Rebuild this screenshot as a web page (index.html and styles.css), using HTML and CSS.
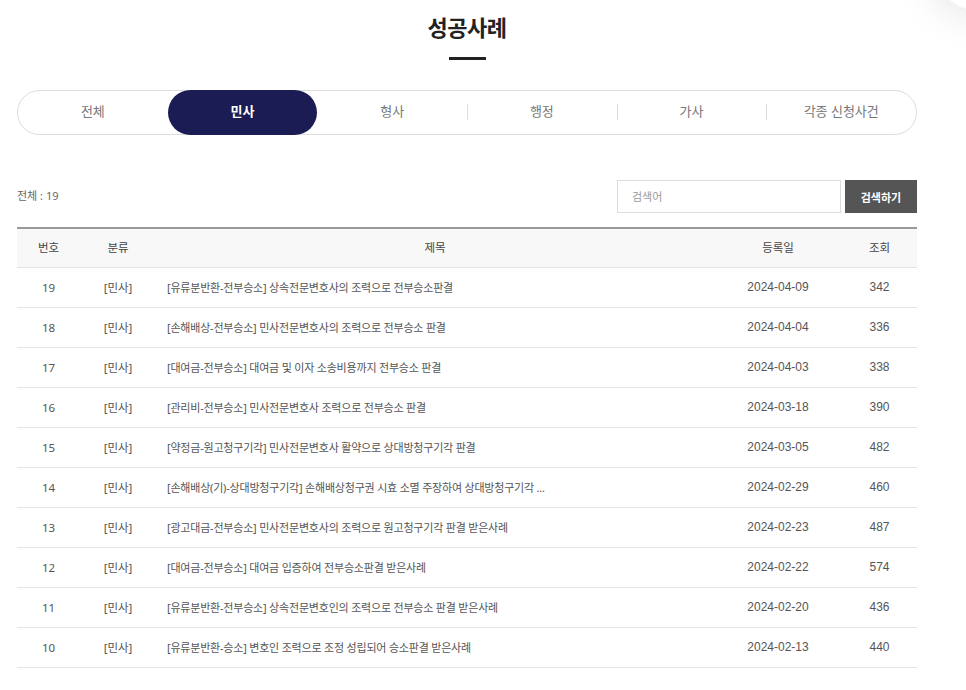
FILE: index.html
```html
<!DOCTYPE html>
<html lang="ko">
<head>
    <meta charset="UTF-8">
    <meta name="viewport" content="width=device-width, initial-scale=1.0">
    <title>성공사례</title>
    <link rel="stylesheet" href="styles.css">
</head>
<body>
    <div class="quick"></div>
    <div class="wrap">
        <h2 class="title">성공사례</h2>
        <ul class="tabs">
            <li>전체</li>
            <li class="on">민사</li>
            <li>형사</li>
            <li>행정</li>
            <li>가사</li>
            <li>각종 신청사건</li>
        </ul>

        <div class="top">
            <p class="total">전체 : 19</p>
            <form class="search">
                <input type="text" placeholder="검색어">
                <button type="button">검색하기</button>
            </form>
        </div>

        <table class="list">
            <colgroup>
                <col class="c-no">
                <col class="c-cate">
                <col>
                <col class="c-date">
                <col class="c-hit">
            </colgroup>
            <thead>
                <tr>
                    <th>번호</th>
                    <th>분류</th>
                    <th>제목</th>
                    <th>등록일</th>
                    <th>조회</th>
                </tr>
            </thead>
            <tbody>
                <tr><td>19</td><td>[민사]</td><td class="subj">[유류분반환-전부승소] 상속전문변호사의 조력으로 전부승소판결</td><td class="num">2024-04-09</td><td class="num">342</td></tr>
                <tr><td>18</td><td>[민사]</td><td class="subj">[손해배상-전부승소] 민사전문변호사의 조력으로 전부승소 판결</td><td class="num">2024-04-04</td><td class="num">336</td></tr>
                <tr><td>17</td><td>[민사]</td><td class="subj">[대여금-전부승소] 대여금 및 이자 소송비용까지 전부승소 판결</td><td class="num">2024-04-03</td><td class="num">338</td></tr>
                <tr><td>16</td><td>[민사]</td><td class="subj">[관리비-전부승소] 민사전문변호사 조력으로 전부승소 판결</td><td class="num">2024-03-18</td><td class="num">390</td></tr>
                <tr><td>15</td><td>[민사]</td><td class="subj">[약정금-원고청구기각] 민사전문변호사 활약으로 상대방청구기각 판결</td><td class="num">2024-03-05</td><td class="num">482</td></tr>
                <tr><td>14</td><td>[민사]</td><td class="subj">[손해배상(기)-상대방청구기각] 손해배상청구권 시효 소멸 주장하여 상대방청구기각 ...</td><td class="num">2024-02-29</td><td class="num">460</td></tr>
                <tr><td>13</td><td>[민사]</td><td class="subj">[광고대금-전부승소] 민사전문변호사의 조력으로 원고청구기각 판결 받은사례</td><td class="num">2024-02-23</td><td class="num">487</td></tr>
                <tr><td>12</td><td>[민사]</td><td class="subj">[대여금-전부승소] 대여금 입증하여 전부승소판결 받은사례</td><td class="num">2024-02-22</td><td class="num">574</td></tr>
                <tr><td>11</td><td>[민사]</td><td class="subj">[유류분반환-전부승소] 상속전문변호인의 조력으로 전부승소 판결 받은사례</td><td class="num">2024-02-20</td><td class="num">436</td></tr>
                <tr><td>10</td><td>[민사]</td><td class="subj">[유류분반환-승소] 변호인 조력으로 조정 성립되어 승소판결 받은사례</td><td class="num">2024-02-13</td><td class="num">440</td></tr>
            </tbody>
        </table>
    </div>
</body>
</html>
```

FILE: styles.css
```css
* {
    margin: 0;
    padding: 0;
    box-sizing: border-box;
}

li {
    list-style: none;
}

body {
    font-family: "Noto Sans", "Noto Sans CJK KR", sans-serif;
    color: #555;
    background: #fff;
    overflow: hidden;
}

.quick {
    position: fixed;
    top: -70px;
    right: -70px;
    width: 100px;
    height: 80px;
    border-radius: 40px;
    background: #fff;
    box-shadow: 0 0 40px 6px rgba(0, 0, 0, 0.1);
}

.wrap {
    width: 900px;
    margin-left: 17px;
    padding-top: 12px;
}

.title {
    text-align: center;
    font-size: 22px;
    font-weight: 700;
    color: #222;
    line-height: 30px;
    letter-spacing: -0.5px;
}

.title::after {
    content: "";
    display: block;
    width: 37px;
    height: 3px;
    background: #222;
    margin: 15px auto 0;
}

.tabs {
    display: flex;
    margin-top: 30px;
    height: 45px;
    border: 1px solid #ddd;
    border-radius: 23px;
}

.tabs li {
    position: relative;
    flex: 1;
    display: flex;
    align-items: center;
    justify-content: center;
    padding-bottom: 4px;
    font-size: 13px;
    color: #777;
    margin: -1px 0;
}

.tabs li.on {
    background: #1c1c54;
    color: #fff;
    font-weight: 700;
    border-radius: 23px;
}

.tabs li:nth-child(n+4)::before {
    content: "";
    position: absolute;
    left: 0;
    top: 14px;
    width: 1px;
    height: 16px;
    background: #ddd;
}

.top {
    display: flex;
    justify-content: space-between;
    align-items: center;
    margin-top: 45px;
}

.total {
    font-size: 11px;
    color: #666;
    padding-bottom: 3px;
}

.search {
    display: flex;
    gap: 4px;
}

.search input {
    width: 224px;
    height: 33px;
    border: 1px solid #ddd;
    padding: 0 14px;
    font-family: inherit;
    font-size: 11px;
    color: #555;
    outline: none;
}

.search input::placeholder {
    color: #999;
}

.search button {
    width: 72px;
    height: 33px;
    border: none;
    background: #555;
    color: #fff;
    font-family: inherit;
    font-size: 11px;
    font-weight: 700;
}

.list {
    width: 100%;
    margin-top: 14px;
    border-collapse: collapse;
    border-top: 2px solid #999;
    font-size: 11.5px;
}

.c-no { width: 63px; }
.c-cate { width: 76px; }
.c-date { width: 128px; }
.c-hit { width: 75px; }

.list th {
    height: 39px;
    padding-bottom: 2px;
    background: #f8f8f8;
    font-weight: 400;
    color: #444;
    border-bottom: 1px solid #e3e3e3;
}

.list td {
    height: 40px;
    text-align: center;
    color: #555;
    border-bottom: 1px solid #e6e6e6;
}

.list td.num {
    font-family: "Liberation Sans", Arial, sans-serif;
    font-size: 12px;
}

.list td.subj {
    text-align: left;
    padding-left: 11px;
    font-size: 11px;
    letter-spacing: -0.2px;
    color: #555;
    white-space: nowrap;
}
```
